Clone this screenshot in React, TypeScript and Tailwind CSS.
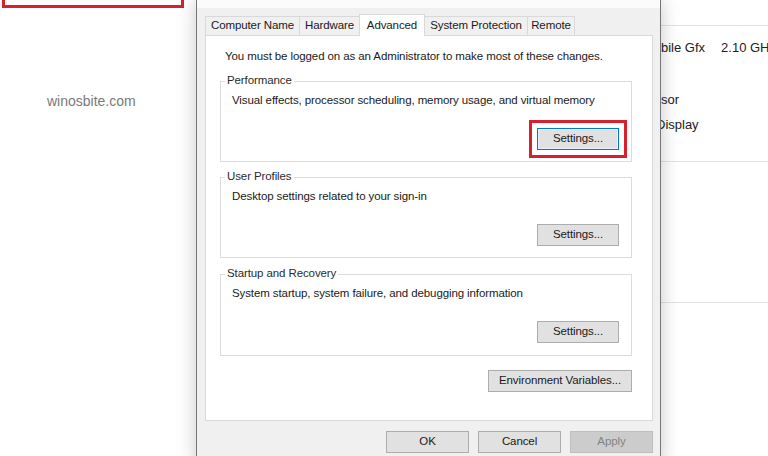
const tabs = [
  { label: "Computer Name", w: "w-[95px]" },
  { label: "Hardware", w: "w-[61px]" },
  { label: "Advanced", w: "w-[66px]", active: true },
  { label: "System Protection", w: "w-[104px]" },
  { label: "Remote", w: "w-[48px]" },
];

const WinButton = ({ label, className = "" }: { label: string; className?: string }) => (
  <button
    type="button"
    className={`h-[22px] border border-[#adadad] bg-[#e1e1e1] text-[11.5px] tracking-[-0.1px] text-[#1a1a1a] ${className}`}
  >
    {label}
  </button>
);

const Group = ({
  title,
  text,
  highlight,
  className = "",
}: {
  title: string;
  text: string;
  highlight?: boolean;
  className?: string;
}) => (
  <div className={`relative border border-[#dcdcdc] flex flex-col pl-[11px] pr-[12px] pt-[11px] ${className}`}>
    <span className="absolute -top-[9px] left-[4px] bg-white px-[2px] leading-[14px] text-[#2b2b2b]">
      {title}
    </span>
    <p className="leading-[14px]">{text}</p>
    <div className="flex justify-end mt-[21px]">
      {highlight ? (
        <div className="-m-[8px] border-[3px] border-[#d6202c] p-[5px]">
          <button
            type="button"
            className="w-[82px] h-[22px] border border-[#0078d7] bg-[#e1e1e1] shadow-[inset_0_0_0_1px_#e8f0f8] text-[11.5px] tracking-[-0.1px]"
          >
            Settings...
          </button>
        </div>
      ) : (
        <WinButton label="Settings..." className="w-[82px]" />
      )}
    </div>
  </div>
);

export default function App() {
  return (
    <div className="w-[768px] h-[456px] overflow-hidden bg-white flex font-['Liberation_Sans',Arial,sans-serif] text-[#1a1a1a]">
      {/* left background */}
      <div className="w-[196px] shrink-0 flex flex-col">
        <div className="ml-[2px] w-[182px] h-[8px] border-[3px] border-t-0 border-[#d6202c]" />
        <p className="mt-[84px] ml-[47px] text-[14px] leading-[18px] text-[#7a7a7a]">winosbite.com</p>
      </div>

      {/* System Properties dialog */}
      <div className="relative z-10 w-[465px] h-[470px] shrink-0 bg-[#f0f0f0] border-x border-[#767676] shadow-[0_0_18px_rgba(0,0,0,0.22)] flex flex-col text-[11.5px] tracking-[-0.1px]">
        <div className="h-[8px] bg-[#fbfbfb]" />
        <div className="mt-[6px] h-[21px] ml-[8px] flex items-end">
          {tabs.map((t, i) =>
            t.active ? (
              <div
                key={t.label}
                className={`${t.w} ${i > 0 ? "-ml-px" : ""} relative z-10 h-[22px] -mb-px bg-white border border-b-0 border-[#d9d9d9] flex items-center justify-center`}
              >
                {t.label}
              </div>
            ) : (
              <div
                key={t.label}
                className={`${t.w} ${i > 0 ? "-ml-px" : ""} h-[19px] bg-[#f0f0f0] border border-b-0 border-[#d9d9d9] flex items-center justify-center`}
              >
                {t.label}
              </div>
            )
          )}
        </div>
        <div className="ml-[8px] mr-[7px] h-[386px] shrink-0 bg-white border border-[#d9d9d9] pl-[14px] pr-[20px] pt-[13px] flex flex-col">
          <p className="ml-[5px] leading-[14px]">
            You must be logged on as an Administrator to make most of these changes.
          </p>
          <Group
            title="Performance"
            text="Visual effects, processor scheduling, memory usage, and virtual memory"
            highlight
            className="mt-[18px] h-[81px]"
          />
          <Group
            title="User Profiles"
            text="Desktop settings related to your sign-in"
            className="mt-[15px] h-[81px]"
          />
          <Group
            title="Startup and Recovery"
            text="System startup, system failure, and debugging information"
            className="mt-[16px] h-[82px]"
          />
          <div className="flex justify-end mt-[14px]">
            <WinButton label="Environment Variables..." className="w-[144px] h-[21px]" />
          </div>
        </div>
        <div className="mt-[10px] pr-[7px] flex justify-end gap-[9px]">
          <WinButton label="OK" className="w-[83px]" />
          <WinButton label="Cancel" className="w-[83px]" />
          <button
            type="button"
            className="w-[83px] h-[22px] border border-[#bfbfbf] bg-[#cccccc] text-[11.5px] text-[#838383]"
          >
            Apply
          </button>
        </div>
      </div>

      {/* background window */}
      <div className="flex-1 overflow-hidden flex flex-col text-[13px] text-[#222]">
        <div className="h-[26px] shrink-0 border-b border-[#e3e3e3]" />
        <div className="mt-[14px] flex gap-[16px] leading-[16px] whitespace-nowrap">
          <span>bile Gfx</span>
          <span>2.10 GHz</span>
        </div>
        <p className="mt-[36px] leading-[16px]">sor</p>
        <p className="mt-[9px] -ml-[5px] leading-[16px]">Display</p>
        <div className="mt-[28px] h-[142px] shrink-0 border-y border-[#e3e3e3]" />
      </div>
    </div>
  );
}
